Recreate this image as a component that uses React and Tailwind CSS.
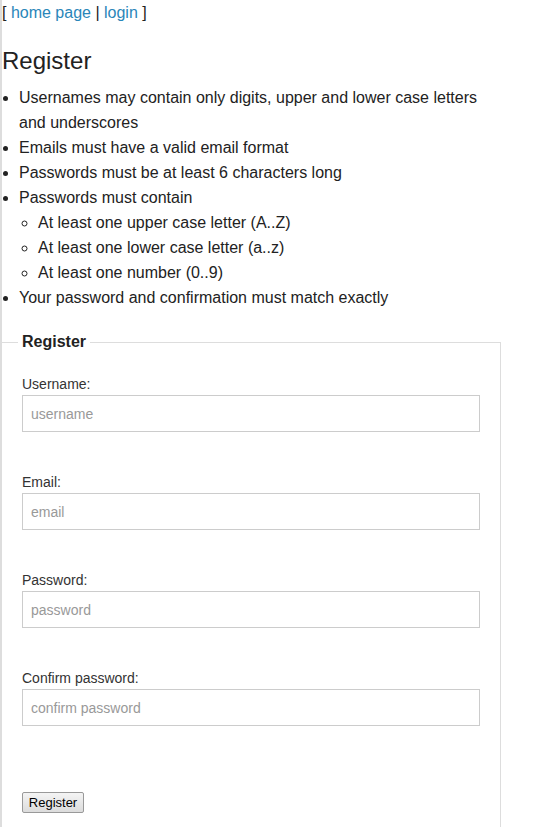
import React from 'react'

const fields = [
  { label: 'Username:', placeholder: 'username', type: 'text' },
  { label: 'Email:', placeholder: 'email', type: 'email' },
  { label: 'Password:', placeholder: 'password', type: 'password' },
  { label: 'Confirm password:', placeholder: 'confirm password', type: 'password' },
]

export default function App() {
  return (
    <div className="min-h-[827px] bg-white border-l-[2px] border-[#dddddd] text-[#222222] font-['Liberation_Sans',Arial,sans-serif] text-[16px]">
      {/* Top nav */}
      <div className="leading-[25px]">
        [ <a href="#" className="text-[#2a86b9]">home page</a> | <a href="#" className="text-[#2a86b9]">login</a> ]
      </div>

      <h1 className="mt-[21px] text-[24px] leading-[30px] font-normal">Register</h1>

      {/* Rules */}
      <ul className="mt-[9px] pl-[17px] max-w-[495px] list-disc leading-[25px]">
        <li>Usernames may contain only digits, upper and lower case letters and underscores</li>
        <li>Emails must have a valid email format</li>
        <li>Passwords must be at least 6 characters long</li>
        <li>
          Passwords must contain
          <ul className="pl-[19px] list-[circle]">
            <li>At least one upper case letter (A..Z)</li>
            <li>At least one lower case letter (a..z)</li>
            <li>At least one number (0..9)</li>
          </ul>
        </li>
        <li>Your password and confirmation must match exactly</li>
      </ul>

      {/* Form */}
      <form className="mt-[22px]" onSubmit={(e) => e.preventDefault()}>
        <fieldset className="w-[501px] border border-[#dddddd] pl-[16px] pr-[16px] pt-[22px] pb-[20px] -ml-[2px]">
          <legend className="px-[4px] ml-[1px] font-bold leading-[20px]">Register</legend>
          {fields.map((f) => (
            <div key={f.label} className="mb-[40px]">
              <label className="block text-[14px] leading-[20px] text-[#333333] ml-[5px]">{f.label}</label>
              <input
                type={f.type}
                placeholder={f.placeholder}
                className="mt-[1px] ml-[5px] block w-[458px] h-[37px] border border-[#cccccc] px-[8px] text-[14px] placeholder:text-[#999999] outline-none"
              />
            </div>
          ))}
          <div className="pt-[24px] ml-[5px]">
            <button
              type="submit"
              className="h-[21px] w-[62px] text-[13px] leading-[19px] text-black border border-[#999999] rounded-[2px] bg-gradient-to-b from-[#f4f4f4] to-[#dcdcdc]"
            >
              Register
            </button>
          </div>
        </fieldset>
      </form>
    </div>
  )
}
